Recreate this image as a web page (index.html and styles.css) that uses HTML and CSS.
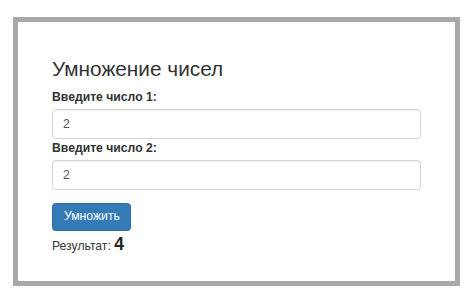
FILE: index.html
```html
<!DOCTYPE html>
<html lang="ru">
<head>
<meta charset="utf-8">
<title>Умножение чисел</title>
<link rel="stylesheet" href="styles.css">
</head>
<body>
<div class="frame">
  <div class="panel">
    <h3 class="title">Умножение чисел</h3>
    <label class="label first" for="n1">Введите число 1:</label>
    <input class="field" id="n1" type="text" value="2">
    <label class="label second" for="n2">Введите число 2:</label>
    <input class="field" id="n2" type="text" value="2">
    <button class="btn" type="button">Умножить</button>
    <div class="result">Результат: <span class="value">4</span></div>
  </div>
</div>
</body>
</html>
```
FILE: styles.css
```css
html, body {
  margin: 0;
  padding: 0;
  background: #ffffff;
}
body {
  font-family: "Liberation Sans", Arial, Helvetica, sans-serif;
  color: #333333;
}
.frame {
  box-sizing: border-box;
  width: 447px;
  height: 269px;
  margin: 17px 0 0 13px;
  border: 5px solid #a9a9a9;
  background: #ffffff;
}
.panel {
  display: flex;
  flex-direction: column;
  align-items: flex-start;
  padding: 35px 34px 0 34px;
}
.title {
  margin: 0;
  font-size: 20.8px;
  line-height: 24px;
  font-weight: 400;
  color: #333333;
}
.label {
  display: block;
  font-size: 12.2px;
  line-height: 16px;
  font-weight: 700;
  color: #333333;
}
.label.first {
  margin-top: 8px;
}
.label.second {
  margin-top: 1px;
}
.field {
  box-sizing: border-box;
  width: 100%;
  height: 30px;
  margin: 4px 0 0 0;
  padding: 0 10px;
  border: 1px solid #d4d4d4;
  border-radius: 3.5px;
  box-shadow: inset 0 1px 1px rgba(0, 0, 0, 0.06);
  font-family: "Liberation Sans", Arial, Helvetica, sans-serif;
  font-size: 12.2px;
  color: #555555;
  background: #ffffff;
  outline: none;
}
.btn {
  box-sizing: border-box;
  height: 28px;
  margin-top: 12.5px;
  padding: 0 10px 0 11px;
  border: 1px solid #2e6da4;
  border-radius: 3.5px;
  background: #337ab7;
  color: #ffffff;
  font-family: "Liberation Sans", Arial, Helvetica, sans-serif;
  font-size: 12.2px;
  line-height: 1;
}
.result {
  margin-top: 5px;
  font-size: 12.2px;
  line-height: 20px;
  color: #333333;
}
.value {
  font-size: 17.5px;
  line-height: 1;
  font-weight: 700;
  color: #222222;
}
```
